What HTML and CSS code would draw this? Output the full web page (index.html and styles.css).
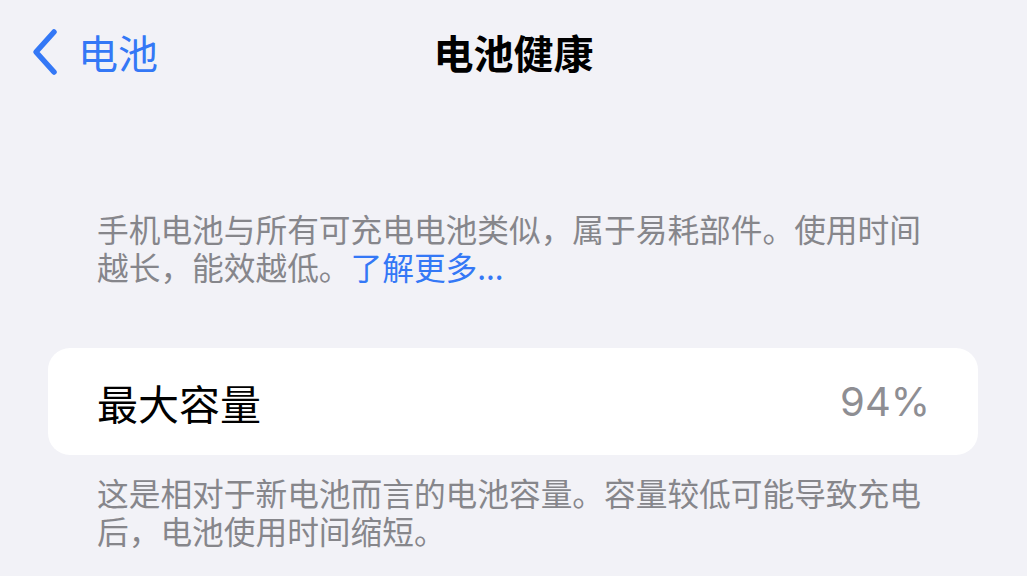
FILE: index.html
```html
<!DOCTYPE html>
<html>

<head>
    <meta charset="utf-8" />
    <title>电池健康</title>
    <link rel="stylesheet" href="styles.css">
</head>

<body>
    <div class="navbar">
        <a class="back" href="#">
            <svg class="chevron" width="28" height="48" viewBox="0 0 28 48">
                <path d="M23 4 L5 24 L23 44" fill="none" stroke="#3478f6" stroke-width="5.5" stroke-linecap="round" stroke-linejoin="round" />
            </svg>
            <span>电池</span>
        </a>
        <h1 class="title">电池健康</h1>
        <div></div>
    </div>

    <p class="note top">手机电池与所有可充电电池类似，属于易耗部件。使用时间越长，能效越低。<a class="link" href="#">了解更多...</a></p>

    <div class="card">
        <span class="label">最大容量</span>
        <span class="value">94%</span>
    </div>

    <p class="note bottom">这是相对于新电池而言的电池容量。容量较低可能导致充电后，电池使用时间缩短。</p>
</body>

</html>
```

FILE: styles.css
```css
body {
    margin: 0;
    background-color: #f2f2f7;
    font-family: "Noto Sans CJK SC", sans-serif;
    color: #000;
}

.navbar {
    display: grid;
    grid-template-columns: 1fr auto 1fr;
    align-items: center;
    height: 104px;
}

.back {
    display: flex;
    align-items: center;
    gap: 19px;
    padding-left: 31px;
    color: #3478f6;
    text-decoration: none;
    font-size: 40px;
}

.chevron {
    display: block;
}

.title {
    margin: 0;
    font-size: 40px;
    font-weight: 700;
    line-height: 1;
}

.note {
    margin: 0;
    padding: 0 97px;
    font-size: 31.7px;
    line-height: 38px;
    color: #86868b;
}

.note.top {
    margin-top: 105px;
}

.note.bottom {
    margin-top: 18px;
}

.link {
    color: #3478f6;
    text-decoration: none;
}

.card {
    display: flex;
    justify-content: space-between;
    align-items: center;
    margin: 63px 49px 0 48px;
    height: 107px;
    padding: 0 48px 0 49px;
    background-color: #fff;
    border-radius: 22px;
}

.label {
    font-size: 41px;
}

.value {
    font-family: "Inter", sans-serif;
    font-size: 40px;
    color: #8e8e93;
}
```
